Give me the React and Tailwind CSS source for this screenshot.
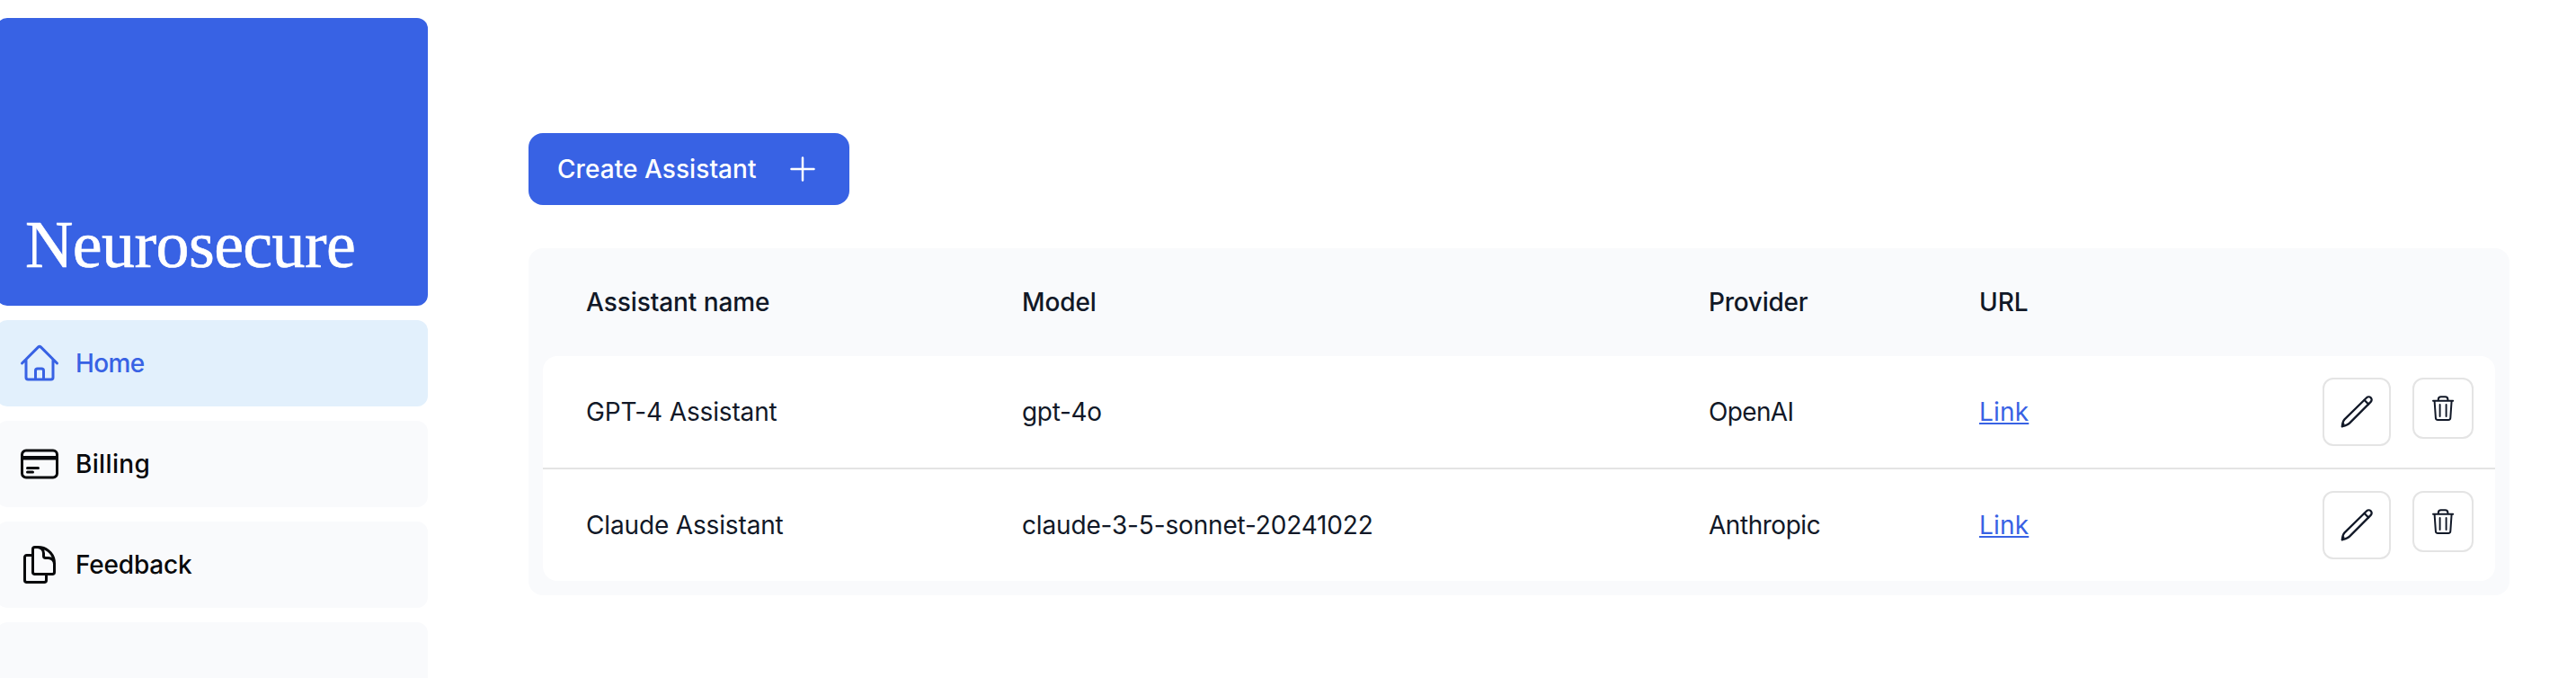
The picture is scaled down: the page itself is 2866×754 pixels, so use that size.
const HOME =
  "m2.25 12 8.954-8.955c.44-.439 1.152-.439 1.591 0L21.75 12M4.5 9.75v10.125c0 .621.504 1.125 1.125 1.125H9.75v-4.875c0-.621.504-1.125 1.125-1.125h2.25c.621 0 1.125.504 1.125 1.125V21h4.125c.621 0 1.125-.504 1.125-1.125V9.75M8.25 21h8.25";
const CARD =
  "M2.25 8.25h19.5M2.25 9h19.5m-16.5 5.25h6m-6 2.25h3m-3.75 3h15a2.25 2.25 0 0 0 2.25-2.25V6.75A2.25 2.25 0 0 0 19.5 4.5h-15a2.25 2.25 0 0 0-2.25 2.25v10.5A2.25 2.25 0 0 0 4.5 19.5Z";
const DOCS =
  "M15.75 17.25v3.375c0 .621-.504 1.125-1.125 1.125h-9.75a1.125 1.125 0 0 1-1.125-1.125V7.875c0-.621.504-1.125 1.125-1.125H6.75a9.06 9.06 0 0 1 1.5.124m7.5 10.376h3.375c.621 0 1.125-.504 1.125-1.125V11.25c0-4.46-3.243-8.161-7.5-8.876a9.06 9.06 0 0 0-1.5-.124H9.375c-.621 0-1.125.504-1.125 1.125v3.5m7.5 10.375H9.375a1.125 1.125 0 0 1-1.125-1.125v-9.25m12 6.625v-1.875a3.375 3.375 0 0 0-3.375-3.375h-1.5a1.125 1.125 0 0 1-1.125-1.125v-1.5a3.375 3.375 0 0 0-3.375-3.375H9.75";
const PLUS = "M12 4.5v15m7.5-7.5h-15";

function Icon({ d, className }) {
  return (
    <svg
      viewBox="0 0 24 24"
      fill="none"
      stroke="currentColor"
      strokeWidth="1.5"
      strokeLinecap="round"
      strokeLinejoin="round"
      className={className}
    >
      <path d={d} />
    </svg>
  );
}

function PencilIcon() {
  return (
    <svg viewBox="0 0 40 40" fill="none" stroke="currentColor" strokeWidth="2.3" strokeLinecap="round" strokeLinejoin="round" className="size-10 shrink-0">
      <path d="M31.1 4.3a3.25 3.25 0 0 1 4.6 4.6L12 32.6c-1.9 1.9-4.4 2.6-8.2 3.7 .3-3.4 .8-6 2.7-7.9Z" />
      <path d="m28.6 7 4.5 4.5M4 36l1.3-2.6" />
    </svg>
  );
}

function TrashIcon() {
  return (
    <svg viewBox="0 0 32 32" fill="none" stroke="currentColor" strokeWidth="2" strokeLinecap="round" strokeLinejoin="round" className="size-8 shrink-0">
      <path d="M5 7.8h22.2M10.8 7.6V6.2a3 3 0 0 1 3-3h4.6a3 3 0 0 1 3 3v1.4" />
      <path d="m6.6 8 1.3 18.8a2.3 2.3 0 0 0 2.3 2.2h11.8a2.3 2.3 0 0 0 2.3-2.2L25.6 8" />
      <path d="M12.6 12v13M19.6 12v13" strokeWidth="1.9" />
    </svg>
  );
}

const nav = [
  { label: "Home", icon: HOME, active: true, tracking: "tracking-[-0.6px]" },
  { label: "Billing", icon: CARD, tracking: "tracking-[0.34px]" },
  { label: "Feedback", icon: DOCS, tracking: "tracking-[-0.2px]" },
];

const rows = [
  {
    name: "GPT-4 Assistant",
    model: "gpt-4o",
    modelTracking: "tracking-[-0.34px]",
    provider: "OpenAI",
    providerTracking: "tracking-[-0.65px]",
  },
  {
    name: "Claude Assistant",
    model: "claude-3-5-sonnet-20241022",
    modelTracking: "tracking-[-0.16px]",
    provider: "Anthropic",
    providerTracking: "tracking-[-0.46px]",
  },
];

function Sidebar() {
  return (
    <aside className="-ml-1 flex w-[480px] shrink-0 flex-col gap-4 pt-5">
      <div className="flex h-80 shrink-0 items-end rounded-xl bg-[#3862e4] pb-[31px] pl-8">
        <span className="font-['Liberation_Serif',serif] text-[74px] leading-none tracking-[-0.6px] text-white [-webkit-text-stroke:0.6px_white]">
          Neurosecure
        </span>
      </div>
      {nav.map((item) => (
        <a
          key={item.label}
          className={
            item.active
              ? "flex h-24 shrink-0 items-center gap-4 rounded-xl bg-[#e2f0fc] pl-6 text-[#3862e4]"
              : "flex h-24 shrink-0 items-center gap-4 rounded-xl bg-[#f9fafc] pl-6 text-[#08090b]"
          }
        >
          <Icon d={item.icon} className="size-12" />
          <span className={`font-medium ${item.tracking}`}>{item.label}</span>
        </a>
      ))}
      <div className="h-24 shrink-0 rounded-xl bg-[#f9fafc]" />
    </aside>
  );
}

function AssistantTable() {
  return (
    <section className="flex flex-col rounded-2xl bg-[#f9fafc] px-4 pb-4">
      <div className="grid h-[120px] grid-cols-[485px_764px_301px_1fr] items-center pl-12 font-medium">
        <span className="tracking-[-0.08px]">Assistant name</span>
        <span className="tracking-[-0.13px]">Model</span>
        <span className="tracking-[-0.26px]">Provider</span>
        <span>URL</span>
      </div>
      <div className="divide-y-2 divide-[#e4e4e4] rounded-2xl bg-white">
        {rows.map((row) => (
          <div key={row.name} className="grid box-content h-[124px] grid-cols-[485px_764px_301px_1fr] items-center pl-12">
            <span className="tracking-[-0.15px]">{row.name}</span>
            <span className={row.modelTracking}>{row.model}</span>
            <span className={row.providerTracking}>{row.provider}</span>
            <div className="flex items-center justify-between pr-6">
              <a className="tracking-[0.18px] text-[#3862e4] underline decoration-2 underline-offset-2">Link</a>
              <div className="flex items-start gap-6">
                <button className="flex size-[76px] items-center justify-center rounded-xl border-2 border-[#e4e4e4]">
                  <PencilIcon />
                </button>
                <button className="flex size-[68px] items-center justify-center rounded-xl border-2 border-[#e4e4e4]">
                  <TrashIcon />
                </button>
              </div>
            </div>
          </div>
        ))}
      </div>
    </section>
  );
}

export default function App() {
  return (
    <div className="flex h-[754px] overflow-hidden bg-white font-['Inter',sans-serif] text-[28px] leading-10 text-[#111827]">
      <Sidebar />
      <main className="ml-28 flex w-[2204px] flex-col gap-12 pt-[148px]">
        <button className="flex h-20 w-[357px] items-center justify-between rounded-2xl bg-[#3862e4] px-8 font-medium text-white">
          <span className="tracking-[0.06px]">Create Assistant</span>
          <Icon d={PLUS} className="size-10" />
        </button>
        <AssistantTable />
      </main>
    </div>
  );
}
